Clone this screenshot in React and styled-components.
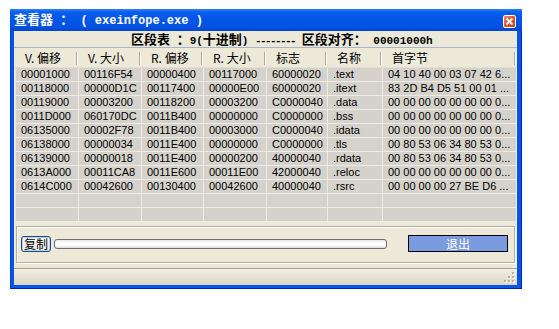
import React from "react";
import styled, { createGlobalStyle } from "styled-components";

const GlobalStyle = createGlobalStyle`
  html, body {
    margin: 0;
    padding: 0;
    background: #ffffff;
  }
  body {
    font-family: "Liberation Sans", "Noto Sans CJK SC", sans-serif;
  }
`;

const cols = "63px 63px 62px 63px 61px 55px 1fr";

const Window = styled.div`
  margin: 9px 0 0 10px;
  width: 512px;
  height: 280px;
  display: flex;
  flex-direction: column;
`;

const TitleBar = styled.div`
  height: 22px;
  flex: none;
  display: flex;
  align-items: center;
  padding-left: 4px;
  background: linear-gradient(#2f84f6 0%, #0a5ded 14%, #0356e6 45%, #0152e2 80%, #0046cf 100%);
  color: #fff;
  font-weight: bold;
`;

const TitleText = styled.div`
  white-space: pre;
  line-height: 16px;
  font-family: "Liberation Mono", monospace;
  font-size: 12px;
`;

const Han = styled.span`
  font-family: "Noto Sans CJK SC", sans-serif;
  font-size: 13px;
  line-height: 16px;
`;

const Dashes = styled.span`
  letter-spacing: -1.6px;
`;

const CloseBtn = styled.div`
  margin-left: auto;
  margin-right: 6px;
  margin-top: 2px;
  width: 11px;
  height: 11px;
  border: 1px solid #fff;
  border-radius: 2px;
  background: linear-gradient(135deg, #f08a64, #e0552e 50%, #c8401c);
  display: flex;
  align-items: center;
  justify-content: center;
`;

const Frame = styled.div`
  flex: 1;
  display: flex;
  padding: 0 5px 4px 4px;
  background: #0555e6;
  box-shadow: inset 1px 0 #0a3fd0, inset -1px 0 #0024b0, inset 0 -1px #0024b0;
`;

const Client = styled.div`
  flex: 1;
  display: flex;
  flex-direction: column;
  background: #ece9d8;
`;

const InfoBar = styled.div`
  height: 16px;
  flex: none;
  padding-left: 117px;
  font-family: "Liberation Mono", monospace;
  font-size: 11px;
  line-height: 16px;
  font-weight: bold;
  color: #000;
  white-space: pre;
`;

const ListView = styled.div`
  height: 174px;
  flex: none;
  border-top: 1px solid #a7b7c9;
  display: flex;
  flex-direction: column;
`;

const HeaderRow = styled.div`
  height: 20px;
  display: grid;
  grid-template-columns: ${cols} 2px;
  background: #ece9d8;
  box-shadow: inset 0 -1px #e2decd;
`;

const HeadCell = styled.div`
  position: relative;
  padding-left: 11px;
  font-family: "Noto Sans CJK SC", sans-serif;
  font-size: 12px;
  line-height: 20px;
  color: #000;
  white-space: pre;
  &::after {
    content: "";
    position: absolute;
    right: 0;
    top: 4px;
    height: 13px;
    width: 1px;
    background: #aca899;
    box-shadow: 1px 0 #fff;
  }
`;

const Body = styled.div`
  margin-left: 2px;
  display: flex;
  flex-direction: column;
`;

const Row = styled.div`
  display: grid;
  grid-template-columns: ${cols};
  height: 14px;
`;

const Cell = styled.div`
  background: #d5d2cb;
  border-right: 1px solid #ecebe6;
  border-bottom: 1px solid #ecebe6;
  padding-left: 5px;
  font-size: 11px;
  line-height: 13px;
  color: #000;
  white-space: nowrap;
  overflow: hidden;
`;

const GroupArea = styled.div`
  height: 46px;
  flex: none;
  box-sizing: border-box;
  padding: 4px 2px 5px 2px;
  display: flex;
`;

const GroupBox = styled.div`
  flex: 1;
  display: flex;
  align-items: center;
  padding: 0 6px 2px 4px;
  border: 1px solid #b4b1a1;
  box-shadow: inset 1px 1px #fff, 1px 1px #fff;
`;

const CopyBtn = styled.div`
  width: 28px;
  height: 14px;
  border: 1px solid #1c4a86;
  border-radius: 3px;
  box-shadow: inset 0 0 0 1px #b8d0f0;
  background: linear-gradient(#fdfdfb, #ecebe4);
  font-family: "Noto Sans CJK SC", sans-serif;
  font-size: 12px;
  line-height: 14px;
  text-align: center;
  color: #000;
  flex: none;
`;

const Progress = styled.div`
  margin-left: 3px;
  width: 331px;
  height: 8px;
  border: 1px solid #6f6f6f;
  border-radius: 3px;
  background: linear-gradient(#e6e6e6, #ffffff 35%, #ffffff 65%, #dcdcdc);
  flex: none;
`;

const ExitBtn = styled.div`
  margin-left: auto;
  width: 98px;
  height: 15px;
  border: 1px solid #000;
  background: #7b9be1;
  color: #fff;
  font-family: "Noto Sans CJK SC", sans-serif;
  font-size: 12px;
  line-height: 15px;
  text-align: center;
  flex: none;
`;

const StatusBar = styled.div`
  flex: 1;
  display: flex;
  justify-content: flex-end;
  align-items: flex-end;
  border-top: 1px solid #a6a392;
  background: linear-gradient(#f1efe4, #e6e3d3 50%, #d9d5c4);
  padding: 0 1px 1px 0;
`;

const rows = [
  ["00001000", "00116F54", "00000400", "00117000", "60000020", ".text", "04 10 40 00 03 07 42 6..."],
  ["00118000", "00000D1C", "00117400", "00000E00", "60000020", ".itext", "83 2D B4 D5 51 00 01 ..."],
  ["00119000", "00003200", "00118200", "00003200", "C0000040", ".data", "00 00 00 00 00 00 00 0..."],
  ["0011D000", "060170DC", "0011B400", "00000000", "C0000000", ".bss", "00 00 00 00 00 00 00 0..."],
  ["06135000", "00002F78", "0011B400", "00003000", "C0000040", ".idata", "00 00 00 00 00 00 00 0..."],
  ["06138000", "00000034", "0011E400", "00000000", "C0000000", ".tls", "00 80 53 06 34 80 53 0..."],
  ["06139000", "00000018", "0011E400", "00000200", "40000040", ".rdata", "00 80 53 06 34 80 53 0..."],
  ["0613A000", "00011CA8", "0011E600", "00011E00", "42000040", ".reloc", "00 00 00 00 00 00 00 0..."],
  ["0614C000", "00042600", "00130400", "00042600", "40000040", ".rsrc", "00 00 00 00 27 BE D6 ..."],
  ["", "", "", "", "", "", ""],
  ["", "", "", "", "", "", ""],
];

const headers = ["V. 偏移", "V. 大小", "R. 偏移", "R. 大小", "标志", "名称", "首字节"];

const Grip = () => (
  <svg width="12" height="12" viewBox="0 0 12 12">
    {[
      [8, 0], [4, 4], [8, 4], [0, 8], [4, 8], [8, 8],
    ].map(([x, y], i) => (
      <g key={i}>
        <rect x={x + 1} y={y + 1} width="2" height="2" fill="#fff" />
        <rect x={x} y={y} width="2" height="2" fill="#b9b5a4" />
      </g>
    ))}
  </svg>
);

export default function App() {
  return (
    <>
      <GlobalStyle />
      <Window>
        <TitleBar>
          <TitleText>
            <Han>查看器</Han>{" "}<Han>：</Han>{" ( exeinfope.exe )"}
          </TitleText>
          <CloseBtn>
            <svg width="9" height="9" viewBox="0 0 9 9">
              <path d="M1.5 1.5 L7.5 7.5 M7.5 1.5 L1.5 7.5" stroke="#fff" strokeWidth="1.8" />
            </svg>
          </CloseBtn>
        </TitleBar>
        <Frame>
          <Client>
            <InfoBar>
              <Han>区段表</Han>{" "}<Han>：</Han>{"9("}<Han>十进制</Han>{") "}
              <Dashes>--------</Dashes>{" "}<Han>区段对齐：</Han>{" 00001000h"}
            </InfoBar>
            <ListView>
              <HeaderRow>
                {headers.map((h) => (
                  <HeadCell key={h}>{h}</HeadCell>
                ))}
              </HeaderRow>
              <Body>
                {rows.map((r, i) => (
                  <Row key={i}>
                    {r.map((c, j) => (
                      <Cell key={j}>{c}</Cell>
                    ))}
                  </Row>
                ))}
              </Body>
            </ListView>
            <GroupArea>
              <GroupBox>
                <CopyBtn>复制</CopyBtn>
                <Progress />
                <ExitBtn>退出</ExitBtn>
              </GroupBox>
            </GroupArea>
            <StatusBar>
              <Grip />
            </StatusBar>
          </Client>
        </Frame>
      </Window>
    </>
  );
}
